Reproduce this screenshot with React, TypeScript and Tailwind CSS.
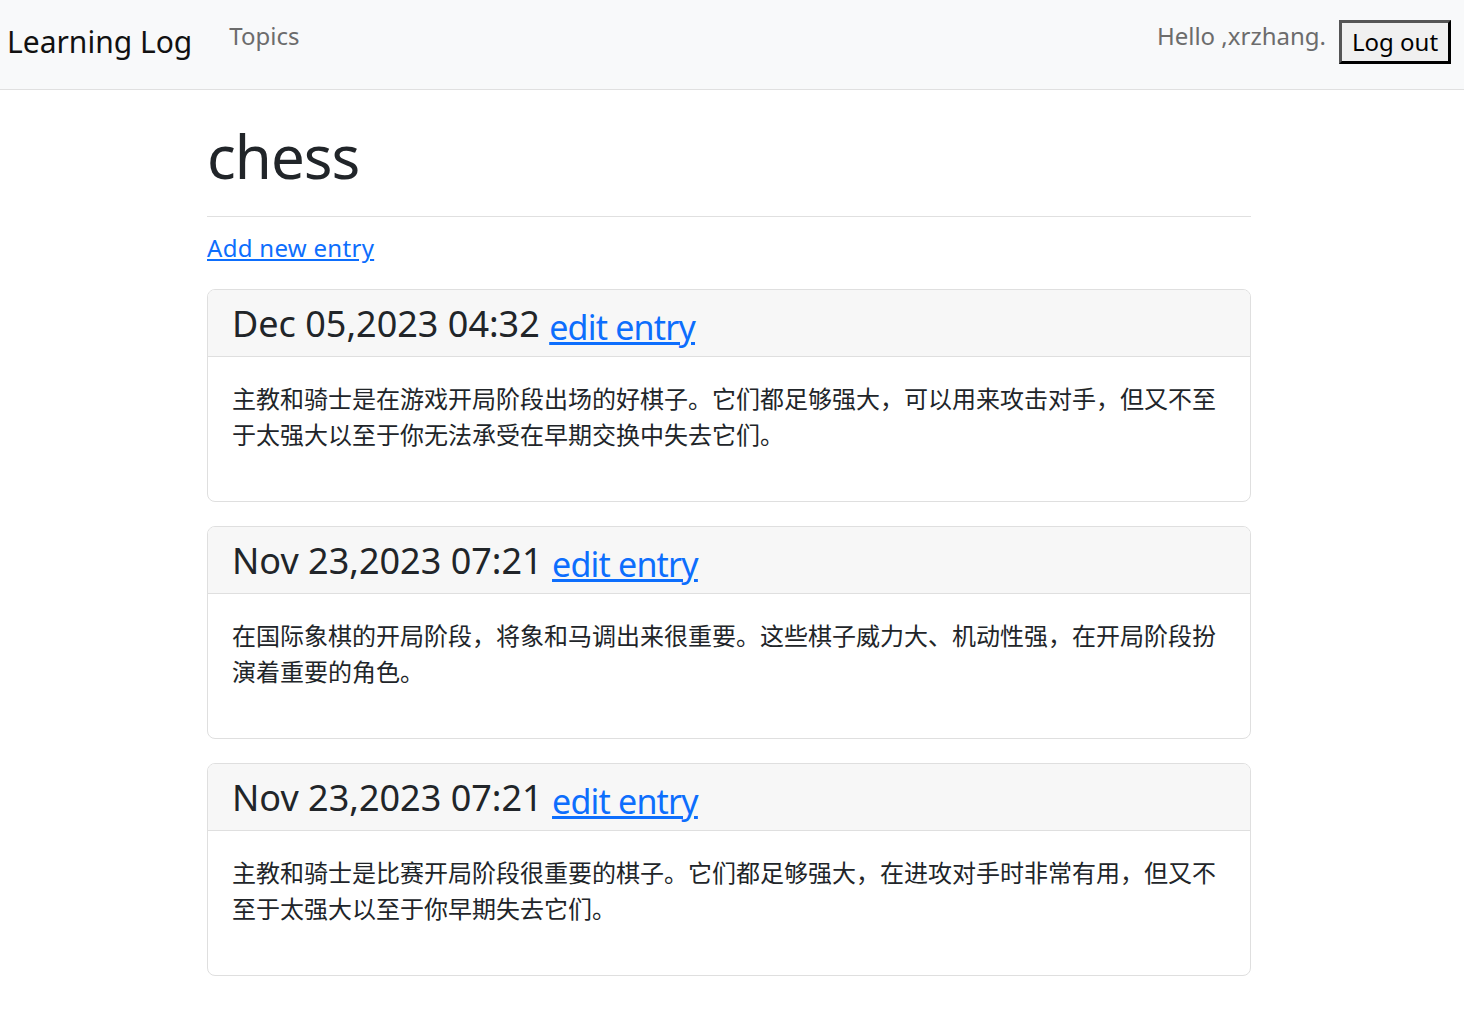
import React from "react";

const entries = [
  {
    date: "Dec 05,2023 04:32",
    text: "主教和骑士是在游戏开局阶段出场的好棋子。它们都足够强大，可以用来攻击对手，但又不至于太强大以至于你无法承受在早期交换中失去它们。",
  },
  {
    date: "Nov 23,2023 07:21",
    text: "在国际象棋的开局阶段，将象和马调出来很重要。这些棋子威力大、机动性强，在开局阶段扮演着重要的角色。",
  },
  {
    date: "Nov 23,2023 07:21",
    text: "主教和骑士是比赛开局阶段很重要的棋子。它们都足够强大，在进攻对手时非常有用，但又不至于太强大以至于你早期失去它们。",
  },
];

export default function App() {
  return (
    <div
      className="min-h-screen bg-white text-[#212529]"
      style={{ fontFamily: '"Noto Sans", "Noto Sans CJK SC", sans-serif' }}
    >
      <nav className="flex h-[90px] items-center border-b border-[#e0e0e0] bg-[#f8f9fa] pl-[7px] pr-[13px]">
        <div className="text-[30px] leading-none text-[#111] -mt-[6px]">Learning Log</div>
        <a className="ml-[37px] -mt-[18px] text-[24px] leading-none text-[#6c6c6c]">Topics</a>
        <div className="flex-1" />
        <span className="-mt-[18px] text-[24px] leading-none text-[#6c6c6c]">Hello ,xrzhang.</span>
        <button className="ml-[13px] -mt-[5px] flex h-[44px] w-[112px] items-center justify-center border-[3px] border-t-[#555] border-l-[#555] border-b-black border-r-black bg-[#f0f0f0] text-[24px] leading-none text-black">
          Log out
        </button>
      </nav>

      <main className="ml-[207px] w-[1044px] pt-[30px]">
        <h1 className="border-b border-[#e0e0e0] pb-[24px] text-[60px] leading-[72px] font-normal tracking-[-1px]">chess</h1>
        <p className="mt-[13px] mb-[23px] text-[24px] leading-[36px]">
          <a className="text-[#0d6efd] underline tracking-[0.3px]">Add new entry</a>
        </p>
        <div className="flex flex-col gap-[24px]">
          {entries.map((e, i) => (
            <div key={i} className="overflow-hidden rounded-[8px] border border-[#dfdfdf]">
              <div className="h-[67px] border-b border-[#dfdfdf] bg-[#f7f7f7] px-[24px] py-[12px]">
                <h4 className="text-[36px] leading-[43px] font-normal">
                  {e.date}{" "}
                  <a className="relative top-[3px] text-[34px] tracking-[-0.8px] text-[#0d6efd] underline">edit entry</a>
                </h4>
              </div>
              <div className="p-[24px]">
                <p className="mb-[24px] text-[24px] leading-[36px]">{e.text}</p>
              </div>
            </div>
          ))}
        </div>
      </main>
    </div>
  );
}
